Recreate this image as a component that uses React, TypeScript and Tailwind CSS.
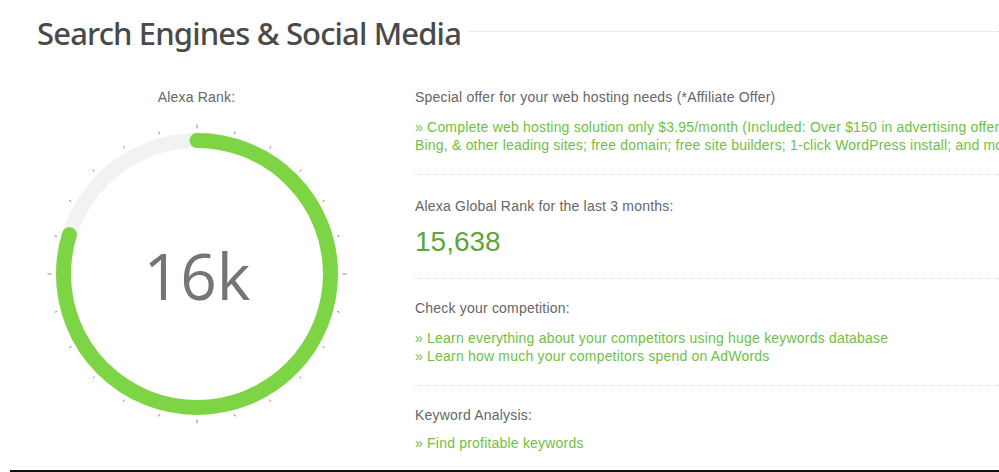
import React from "react";

const CX = 155;
const R = 133.5;
const CIRC = 2 * Math.PI * R;
const FILLED = (287 / 360) * CIRC;

function Gauge() {
  const ticks = Array.from({ length: 24 }, (_, i) => i * 15);
  return (
    <div className="relative w-[310px] h-[310px]">
      <svg width="310" height="310" viewBox="0 0 310 310">
        {ticks.map((deg) => {
          const major = deg % 90 === 0;
          const r1 = major ? 145.5 : 145;
          const r2 = major ? 149.5 : 147.5;
          const a = (deg * Math.PI) / 180;
          return (
            <line
              key={deg}
              x1={CX + r1 * Math.sin(a)}
              y1={CX - r1 * Math.cos(a)}
              x2={CX + r2 * Math.sin(a)}
              y2={CX - r2 * Math.cos(a)}
              stroke="#8a8a8a"
              strokeWidth="1"
            />
          );
        })}
        <circle cx={CX} cy={CX} r={R} fill="none" stroke="#f2f2f2" strokeWidth="15" />
        <circle
          cx={CX}
          cy={CX}
          r={R}
          fill="none"
          stroke="#7dd444"
          strokeWidth="15"
          strokeLinecap="round"
          strokeDasharray={`${FILLED} ${CIRC}`}
          transform={`rotate(-90 ${CX} ${CX})`}
        />
      </svg>
      <div className="absolute inset-0 flex items-center justify-center pt-[4px]">
        <span className="text-[64px] leading-none text-[#757575] font-['Open_Sans',sans-serif]">
          16k
        </span>
      </div>
    </div>
  );
}

function Divider({ className = "" }: { className?: string }) {
  return <div className={`border-t border-dotted border-[#dddddd] ${className}`} />;
}

function Link({ children }: { children: React.ReactNode }) {
  return (
    <div className="text-[14px] leading-[18px] tracking-[0.2px] text-[#6fbf44] whitespace-nowrap">
      » {children}
    </div>
  );
}

export default function App() {
  return (
    <div className="w-[999px] h-[472px] overflow-hidden bg-white flex flex-col font-['Liberation_Sans',sans-serif]">
      <div className="flex items-center mt-[13px] pl-[37px] h-[40px]">
        <h1 className="text-[31px] leading-[40px] tracking-[-0.85px] font-medium text-[#4a4a4a] font-['Noto_Sans',sans-serif] whitespace-nowrap">
          Search Engines &amp; Social Media
        </h1>
        <div className="flex-1 ml-[8px] mt-[-4px] border-t border-dotted border-[#dcdcdc]" />
      </div>

      <div className="flex mt-[35px] flex-1">
        <div className="w-[393px] shrink-0 flex flex-col items-center">
          <div className="text-[14px] leading-[18px] tracking-[0.2px] text-[#666666]">Alexa Rank:</div>
          <div className="mt-[13px] ml-[1px]">
            <Gauge />
          </div>
        </div>

        <div className="ml-[22px] flex-1 min-w-0 flex flex-col tracking-[0.2px]">
          <div className="text-[14px] leading-[18px] text-[#666666]">
            Special offer for your web hosting needs (*Affiliate Offer)
          </div>
          <div className="mt-[12px] text-[14px] leading-[18px] text-[#6fbf44] whitespace-nowrap">
            <div>» Complete web hosting solution only $3.95/month (Included: Over $150 in advertising offers for Google,</div>
            <div>Bing, &amp; other leading sites; free domain; free site builders; 1-click WordPress install; and more)</div>
          </div>

          <Divider className="mt-[20px]" />

          <div className="mt-[22px] text-[14px] leading-[18px] text-[#666666]">
            Alexa Global Rank for the last 3 months:
          </div>
          <div className="mt-[11px] text-[28px] leading-[32px] tracking-normal text-[#5fa53a]">15,638</div>

          <Divider className="mt-[20px]" />

          <div className="mt-[20px] text-[14px] leading-[18px] text-[#666666]">Check your competition:</div>
          <div className="mt-[12px]">
            <Link>Learn everything about your competitors using huge keywords database</Link>
            <Link>Learn how much your competitors spend on AdWords</Link>
          </div>

          <Divider className="mt-[20px]" />

          <div className="mt-[20px] text-[14px] leading-[18px] text-[#666666]">Keyword Analysis:</div>
          <div className="mt-[10px]">
            <Link>Find profitable keywords</Link>
          </div>
        </div>
      </div>

      <div className="h-[2px] ml-[10px] bg-[#111111] shrink-0" />
    </div>
  );
}
